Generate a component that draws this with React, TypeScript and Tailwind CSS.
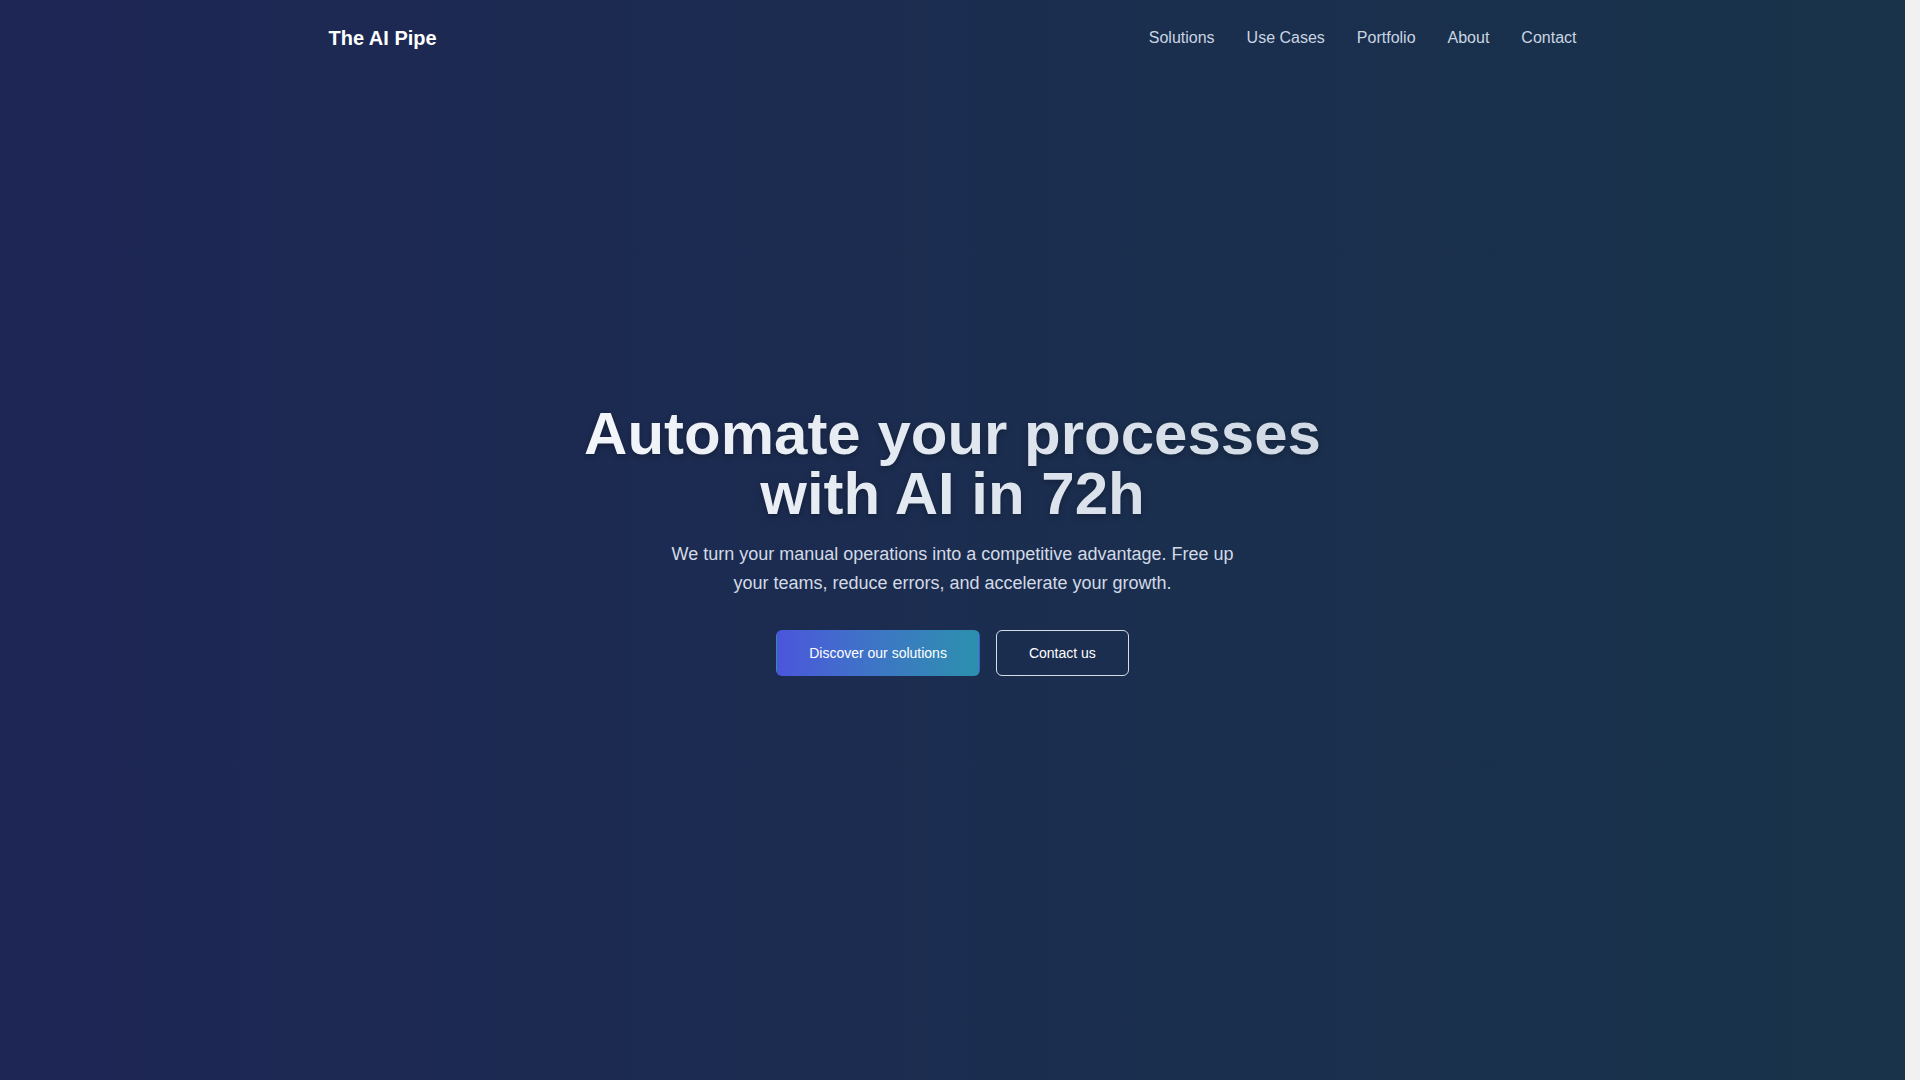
const links = ["Solutions", "Use Cases", "Portfolio", "About", "Contact"];

function Navigation() {
  return (
    <header className="absolute inset-x-0 top-0 z-20">
      <div className="mx-auto flex max-w-7xl items-center justify-between px-4 py-6">
        <a href="#" className="text-xl font-bold text-white">
          The AI Pipe
        </a>
        <nav className="flex items-center gap-8">
          {links.map((label) => (
            <a key={label} href="#" className="text-base text-slate-300 transition hover:text-white">
              {label}
            </a>
          ))}
        </nav>
      </div>
    </header>
  );
}

function Hero() {
  return (
    <section className="flex h-screen items-center justify-center px-4">
      <div className="flex flex-col items-center text-center">
        <h1 className="mx-auto max-w-3xl bg-gradient-to-r from-[#f4f7fb] to-[#cfd8e4] bg-clip-text text-6xl leading-none font-bold text-transparent drop-shadow-[0_2px_3px_rgba(0,0,0,0.3)]">
          Automate your processes with AI in 72h
        </h1>
        <p className="mx-auto mt-4 max-w-xl text-lg leading-relaxed text-[#d3dae5]">
          We turn your manual operations into a competitive advantage. Free up your teams, reduce errors, and accelerate your growth.
        </p>
        <div className="mt-8 flex items-center gap-4">
          <a
            href="#solutions"
            className="rounded-md border border-transparent bg-gradient-to-r from-[#4b55db] to-[#2b90ad] px-8 py-3 text-sm text-white transition hover:opacity-90"
          >
            Discover our solutions
          </a>
          <a
            href="#contact"
            className="rounded-md border border-[#d7dde8] px-8 py-3 text-sm text-white transition hover:bg-white/10"
          >
            Contact us
          </a>
        </div>
      </div>
    </section>
  );
}

export default function App() {
  // right gutter mirrors the page scrollbar in the original capture
  return (
    <div className="h-screen overflow-hidden bg-[#f1f1f1] pr-[15px] font-['Liberation_Sans',Arial,sans-serif]">
      <div className="relative bg-gradient-to-r from-[#1e2655] to-[#18334a]">
        <Navigation />
        <Hero />
      </div>
    </div>
  );
}
